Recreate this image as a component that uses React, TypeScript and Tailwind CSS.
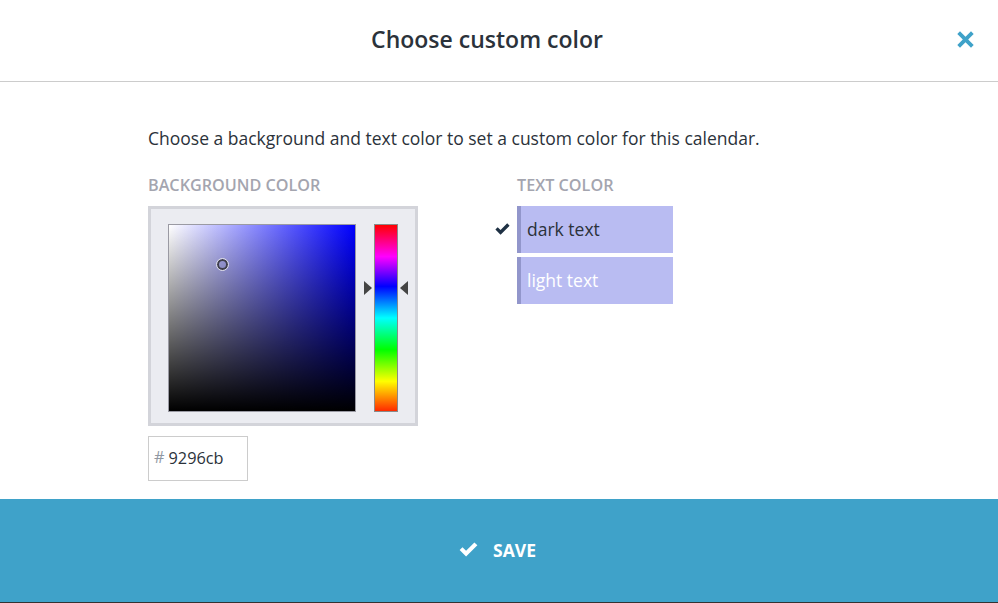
function CheckMark({ className }: { className?: string }) {
  return (
    <svg viewBox="0 0 16 13" className={className} fill="currentColor" aria-hidden>
      <path d="M5.9 12.6 0.3 7 2.8 4.5 5.9 7.6 13.1 0.4 15.7 2.9Z" />
    </svg>
  )
}

function CloseMark({ className }: { className?: string }) {
  return (
    <svg viewBox="0 0 17 17" className={className} fill="currentColor" aria-hidden>
      <path d="M3 0.3 8.5 5.8 14 0.3 16.7 3 11.2 8.5 16.7 14 14 16.7 8.5 11.2 3 16.7 0.3 14 5.8 8.5 0.3 3Z" />
    </svg>
  )
}

function ColorPicker() {
  return (
    <div className="flex h-[220px] w-[270px] gap-[18px] border-[3px] border-[#d3d4da] bg-[#ebecf1] pl-[17px] pt-[15px]">
      <div className="relative h-[188px] w-[188px] border border-[#9a9aa3] bg-[linear-gradient(to_bottom,transparent,#000),linear-gradient(to_right,#fff,#0000ff)]">
        <div className="absolute left-[48px] top-[34px] h-[11px] w-[11px] rounded-full border-2 border-[#3f3f4c] outline outline-1 outline-[#e0e0e8]" />
      </div>
      <div className="relative h-[188px] w-6 border border-[#8a8a8a] bg-[linear-gradient(to_bottom,#ff0000_0%,#ff00ff_17%,#0000ff_33%,#00ffff_50%,#00ff00_67%,#ffff00_84%,#ff2a00_100%)]">
        <div className="absolute -left-[11px] top-[56px] h-0 w-0 border-y-[7px] border-l-[8px] border-y-transparent border-l-[#444]" />
        <div className="absolute -right-[11px] top-[56px] h-0 w-0 border-y-[7px] border-r-[8px] border-y-transparent border-r-[#444]" />
      </div>
    </div>
  )
}

export default function App() {
  return (
    <div className="flex h-[603px] w-[998px] flex-col overflow-hidden bg-white font-['Open_Sans',sans-serif] text-[#2b323a]">
      <header className="relative flex h-[82px] shrink-0 items-center justify-center border-b border-[#cccccc] pb-[3px] pr-[24px]">
        <h1 className="text-[23px] font-semibold">Choose custom color</h1>
        <button type="button" aria-label="Close" className="absolute right-[24px] top-[31px] text-[#3fa2c9]">
          <CloseMark className="h-[17px] w-[17px]" />
        </button>
      </header>

      <main className="flex-1 pl-[148px] pt-[42px]">
        <p className="text-[17.5px] leading-[28px]">
          Choose a background and text color to set a custom color for this calendar.
        </p>
        <div className="mt-[22px] flex">
          <section className="w-[369px]">
            <h2 className="mb-[8px] -mt-[1px] pb-[1px] text-[16.2px] font-semibold uppercase leading-[24px] text-[#a4a5af]">Background color</h2>
            <ColorPicker />
            <div className="mt-[10px] flex h-[45px] w-[100px] items-center border border-[#cccccc] pl-[5px] text-[16.3px]">
              <span className="mr-[4px] -translate-y-px text-[#8f98a3]">#</span>
              <span>9296cb</span>
            </div>
          </section>
          <section>
            <h2 className="mb-[8px] -mt-[1px] pb-[1px] text-[16.2px] font-semibold uppercase leading-[24px] text-[#a4a5af]">Text color</h2>
            <div className="flex w-[156px] flex-col gap-1">
              <div className="relative flex h-[47px] items-center border-l-4 border-[#9296cb] bg-[#b9bcf2] pl-[6px] text-[17.5px]">
                <CheckMark className="absolute -left-[26px] top-[17px] h-[12px] w-[15px] text-[#1f3144]" />
                dark text
              </div>
              <div className="flex h-[47px] items-center border-l-4 border-[#9296cb] bg-[#b9bcf2] pl-[6px] text-[17.5px] text-white">
                light text
              </div>
            </div>
          </section>
        </div>
      </main>

      <footer className="flex h-[104px] shrink-0 items-center justify-center gap-[15px] border-b border-[#333] bg-[#3fa2c9] pr-[3px] text-white">
        <CheckMark className="h-[15px] w-[19px] -translate-y-px" />
        <span className="text-[17.5px] font-bold">SAVE</span>
      </footer>
    </div>
  )
}
